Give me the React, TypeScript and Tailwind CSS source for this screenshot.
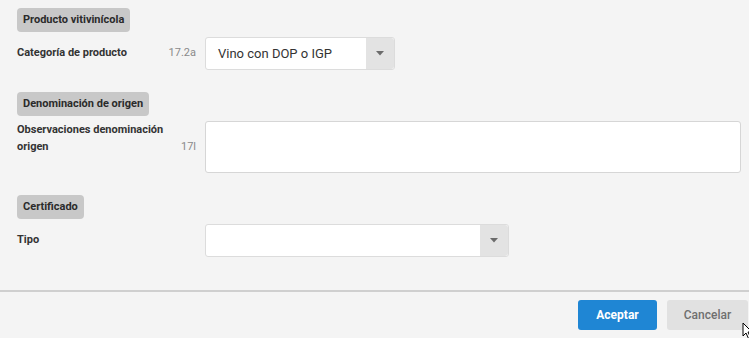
import React from "react"

function Heading({ children }: { children: React.ReactNode }) {
  return (
    <div className="flex">
      <div className="h-[24px] px-[6px] flex items-center rounded-[4px] bg-[#c8c8c8] text-[11px] font-bold text-[#2b2b2b]">
        {children}
      </div>
    </div>
  )
}

function Caret() {
  return (
    <svg width="8" height="5" viewBox="0 0 8 5">
      <path d="M0 0 L8 0 L4 4.5 Z" fill="#6b6b6b" />
    </svg>
  )
}

function Select({ value, width }: { value?: string; width: string }) {
  return (
    <div className={`${width} h-[33px] flex bg-white border border-[#dcdcdc] rounded-[3px]`}>
      <div className="flex-1 flex items-center pl-[12px] text-[13px] text-[#333]">{value}</div>
      <div className="w-[28px] flex items-center justify-center bg-[#e3e3e3] rounded-r-[3px]">
        <Caret />
      </div>
    </div>
  )
}

export default function App() {
  return (
    <div className="relative w-[749px] h-[338px] bg-[#f4f4f4] flex flex-col font-['Roboto',sans-serif] overflow-hidden">
      <div className="h-[290px] pl-[17px] pr-[8px] pt-[8px]">
        <Heading>Producto vitivinícola</Heading>
        <div className="mt-[5px] flex items-center">
          <div className="w-[150px] text-[11px] font-bold text-[#333]">Categoría de producto</div>
          <div className="w-[29px] text-right text-[11px] text-[#8a8a8a]">17.2a</div>
          <div className="ml-[9px]">
            <Select value="Vino con DOP o IGP" width="w-[190px]" />
          </div>
        </div>

        <div className="mt-[22px]">
          <Heading>Denominación de origen</Heading>
        </div>
        <div className="mt-[5px] flex">
          <div className="w-[150px] text-[11px] leading-[17px] font-bold text-[#333]">
            Observaciones denominación origen
          </div>
          <div className="w-[29px] flex items-center justify-end text-[11px] text-[#8a8a8a]">17l</div>
          <div className="ml-[9px] flex-1 h-[52px] bg-white border border-[#d6d6d6] rounded-[3px]" />
        </div>

        <div className="mt-[22px]">
          <Heading>Certificado</Heading>
        </div>
        <div className="mt-[5px] flex items-center">
          <div className="w-[150px] text-[11px] font-bold text-[#333]">Tipo</div>
          <div className="w-[29px]" />
          <div className="ml-[9px]">
            <Select width="w-[304px]" />
          </div>
        </div>
      </div>

      <div className="border-t-2 border-[#cfcfcf] flex justify-end gap-[10px] pt-[8px] pr-[1px]">
        <button className="w-[79px] h-[30px] rounded-[3px] bg-[#1f86d4] text-white text-[12px] font-bold">
          Aceptar
        </button>
        <button className="w-[81px] h-[30px] rounded-[3px] bg-[#e1e1e1] text-[#6f6f6f] text-[12px] font-medium">
          Cancelar
        </button>
      </div>

      <svg className="absolute left-[742px] top-[322px]" width="12" height="18" viewBox="0 0 12 18">
        <path d="M1 1 L1 14 L4 11 L6.5 16.5 L8.5 15.5 L6 10 L10 10 Z" fill="white" stroke="black" strokeWidth="1" />
      </svg>
    </div>
  )
}
